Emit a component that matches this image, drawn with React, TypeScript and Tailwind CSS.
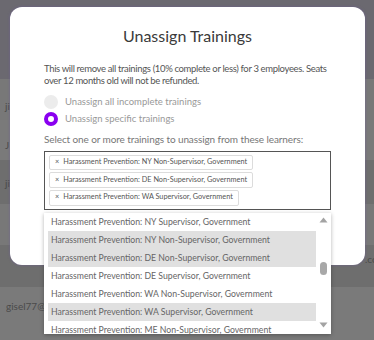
import React from "react";

const SELECTED = [
  "Harassment Prevention: NY Non-Supervisor, Government",
  "Harassment Prevention: DE Non-Supervisor, Government",
  "Harassment Prevention: WA Supervisor, Government",
];

const OPTIONS = [
  { label: "Harassment Prevention: NY Supervisor, Government", on: false },
  { label: "Harassment Prevention: NY Non-Supervisor, Government", on: true },
  { label: "Harassment Prevention: DE Non-Supervisor, Government", on: true },
  { label: "Harassment Prevention: DE Supervisor, Government", on: false },
  { label: "Harassment Prevention: WA Non-Supervisor, Government", on: false },
  { label: "Harassment Prevention: WA Supervisor, Government", on: true },
  { label: "Harassment Prevention: ME Non-Supervisor, Government", on: false },
];

export default function App() {
  return (
    <div
      className="relative h-[340px] w-[374px] overflow-hidden bg-[#6c6a70]"
      style={{ fontFamily: "Lato, 'Open Sans', sans-serif" }}
    >
      {/* page behind the overlay */}
      <div className="flex flex-col text-[10px] text-[#4a4a4a]">
        <div className="h-[79px] bg-[#6b6970]" />
        <div className="flex h-[41px] items-center bg-[#787878] px-[5px] pt-[14px]">ji</div>
        <div className="flex h-[40px] items-center bg-[#7a7a7a] px-[5px] pt-[10px]">J</div>
        <div className="flex h-[44px] items-center bg-[#6e6e6e] px-[5px] pt-[2px]">ji</div>
        <div className="h-[41px] bg-[#787878]" />
        <div className="flex h-[42px] items-end justify-end bg-[#6e6e6e] pb-[20px]">
          <span className="w-[9px] overflow-hidden whitespace-nowrap">.co</span>
        </div>
        <div className="flex h-[53px] items-start bg-[#7a7a7a] px-[6px] pt-[12px]">
          <span className="w-[38px] overflow-hidden whitespace-nowrap">gisel77@gmail.com</span>
        </div>
      </div>

      {/* modal */}
      <div className="absolute left-[10px] top-[7px] h-[258px] w-[355px] rounded-[12px] bg-white shadow-[0_0_3px_rgba(110,90,160,0.6)]">
        <h2 className="pt-[19px] text-center text-[16px] leading-[20px] text-[#3a3a3a]">
          Unassign Trainings
        </h2>
        <div className="px-[34px] pt-[17px]">
          <p className="text-[9.5px] leading-[12px] tracking-[-0.35px] text-[#555]">
            This will remove all trainings (10% complete or less) for 3 employees. Seats over 12
            months old will not be refunded.
          </p>
          <div className="mt-[8px] flex flex-col gap-[3px]">
            <div className="flex items-center gap-[7px]">
              <span className="h-[14px] w-[14px] rounded-full bg-[#ececec]" />
              <span className="text-[9.5px] text-[#999]">Unassign all incomplete trainings</span>
            </div>
            <div className="flex items-center gap-[7px]">
              <span className="h-[14px] w-[14px] rounded-full border-[4px] border-[#8a00f0] bg-white" />
              <span className="text-[9.5px] text-[#999]">Unassign specific trainings</span>
            </div>
          </div>
          <p className="mt-[5px] text-[10px] leading-[14px] tracking-[-0.1px] text-[#777]">
            Select one or more trainings to unassign from these learners:
          </p>
          <div className="mt-[5px] flex h-[59px] w-[287px] flex-col items-start gap-[2px] border border-[#555] p-[3px] pl-[4px]">
            {SELECTED.map((s) => (
              <div
                key={s}
                className="flex h-[16px] items-center gap-[4px] rounded-[2px] border border-[#dcdcdc] px-[5px] text-[7.3px] text-[#555]"
              >
                <span>×</span>
                <span>{s}</span>
              </div>
            ))}
          </div>
        </div>
      </div>

      {/* dropdown list */}
      <div className="absolute left-[44px] top-[213px] flex h-[121px] w-[287px] overflow-hidden bg-white shadow-[0_1px_4px_rgba(0,0,0,0.3)]">
        <div className="flex flex-1 flex-col pl-[4px]">
          {OPTIONS.map((o) => (
            <div
              key={o.label}
              className={`flex h-[18px] shrink-0 items-center pl-[3px] text-[8.7px] text-[#666] ${
                o.on ? "bg-[#e0e0e0]" : ""
              }`}
            >
              {o.label}
            </div>
          ))}
        </div>
        <div className="relative w-[15px]">
          <svg className="absolute left-[3px] top-[4px]" width="9" height="6" viewBox="0 0 9 6">
            <path d="M0.5 5.5 L4.5 0.5 L8.5 5.5 Z" fill="#a3a3a3" />
          </svg>
          <div className="absolute left-[4px] top-[49px] h-[13px] w-[7px] rounded-[4px] bg-[#a8a8a8]" />
          <svg className="absolute bottom-[6px] left-[3px]" width="9" height="6" viewBox="0 0 9 6">
            <path d="M0.5 0.5 L4.5 5.5 L8.5 0.5 Z" fill="#a3a3a3" />
          </svg>
        </div>
      </div>
    </div>
  );
}
